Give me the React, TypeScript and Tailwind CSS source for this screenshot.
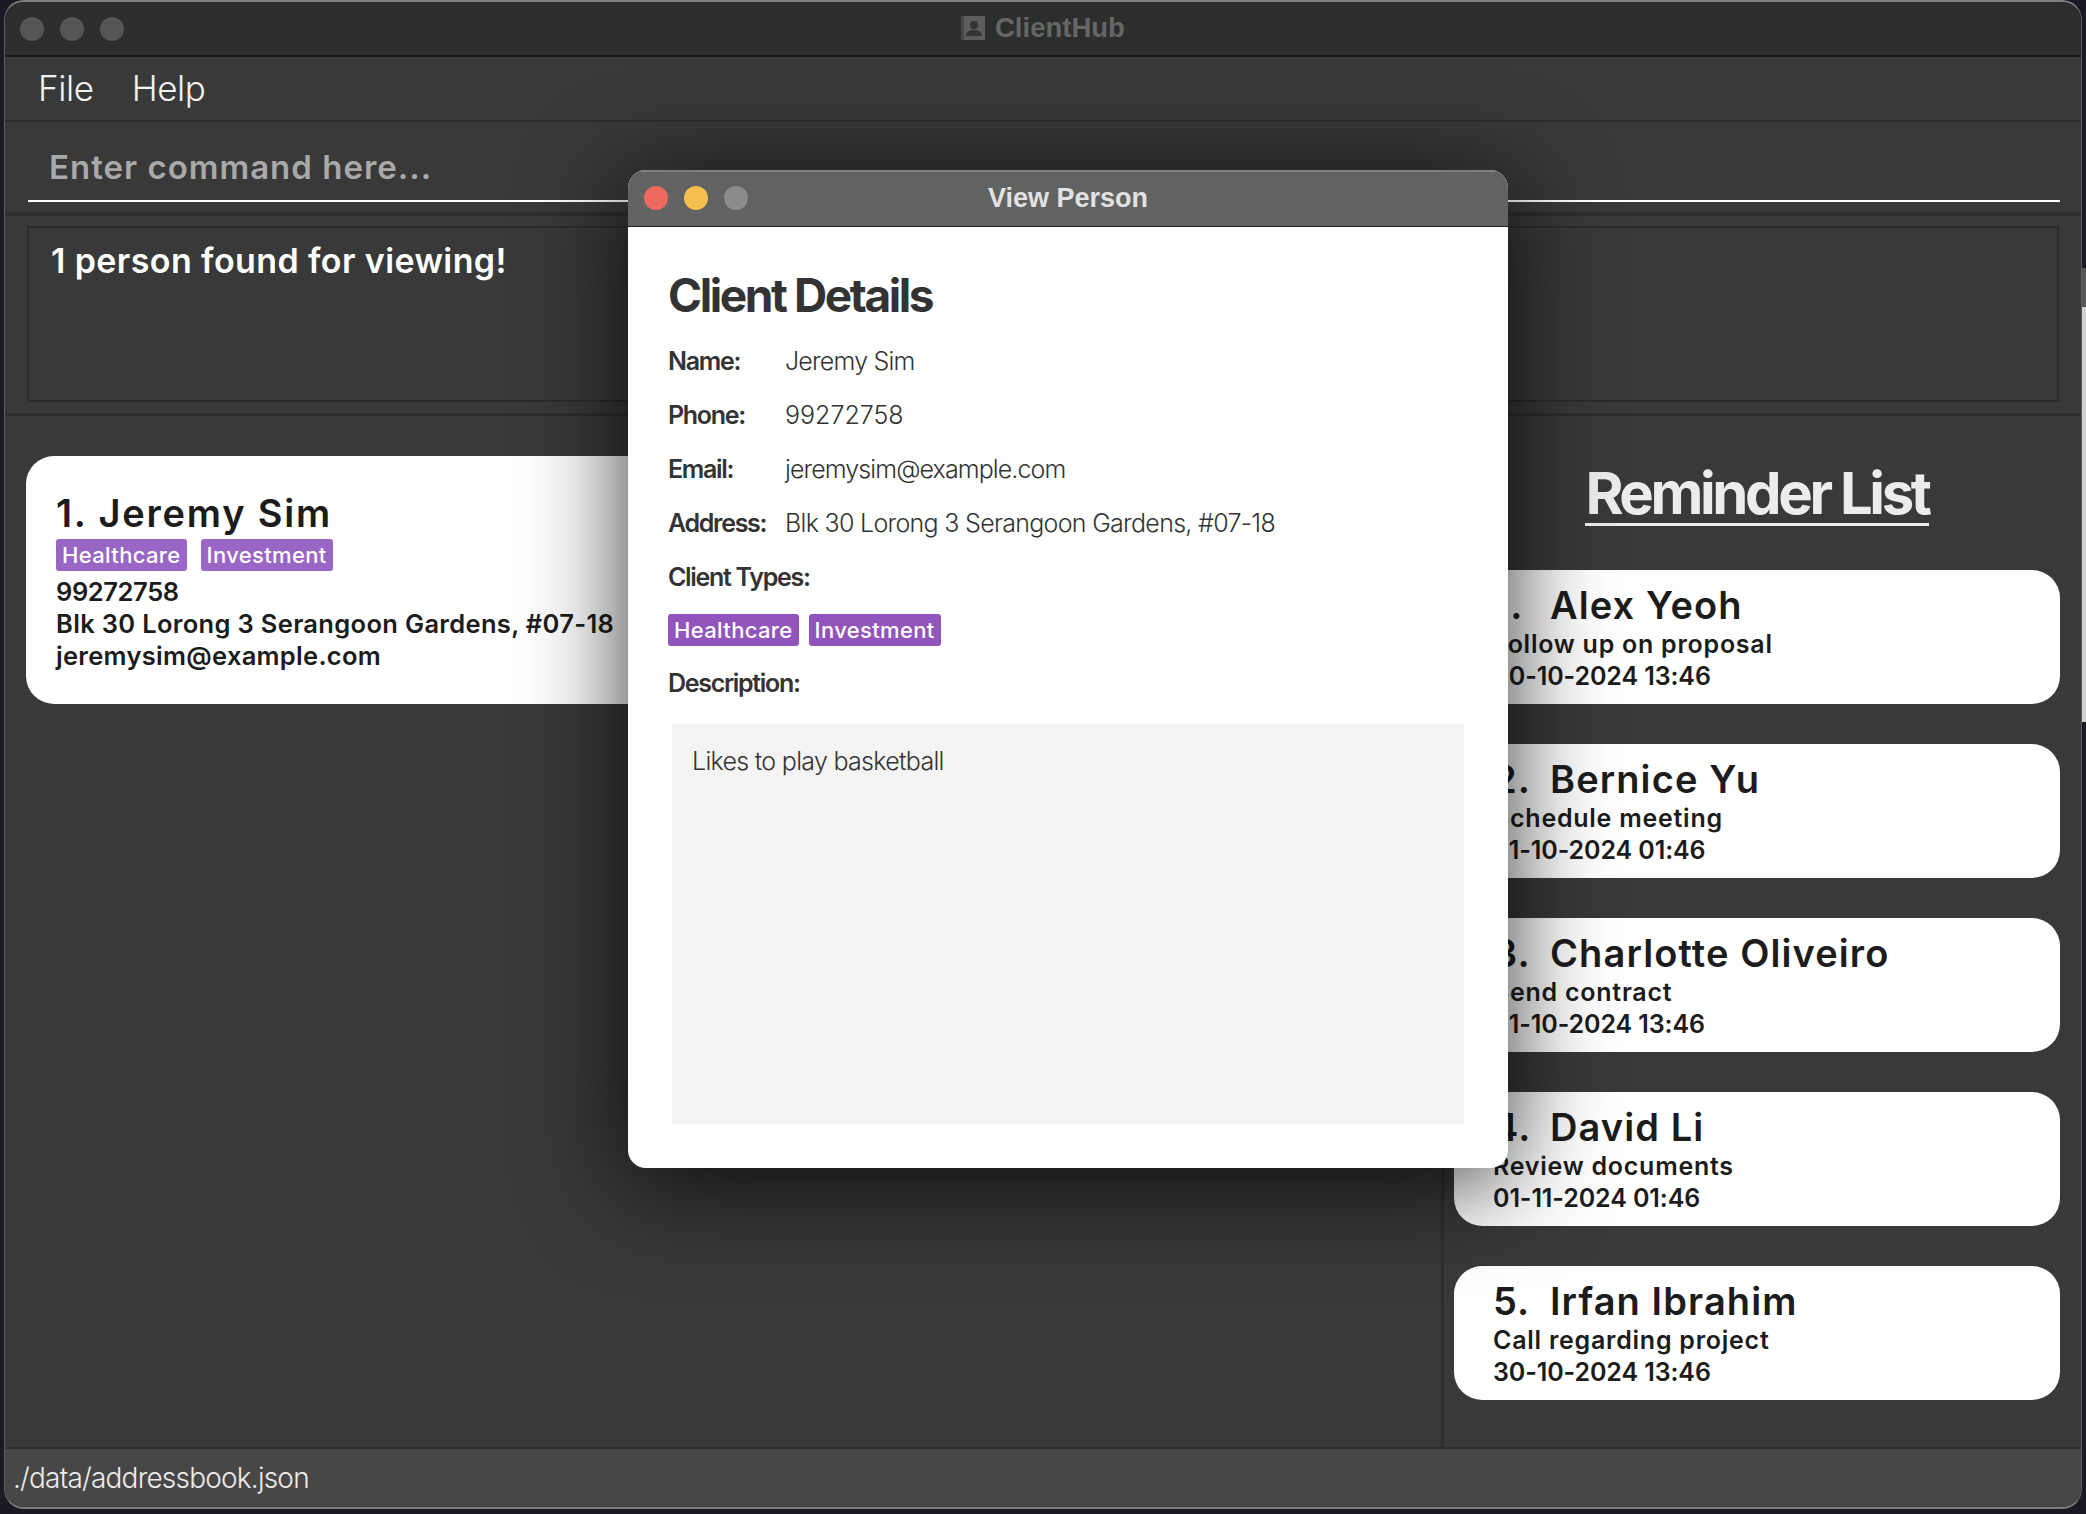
const sans = "font-['Liberation_Sans',Arial,sans-serif]";
const inter = "font-['Inter',sans-serif]";

const reminders = [
  { id: 1, name: 'Alex Yeoh', note: 'Follow up on proposal', date: '30-10-2024 13:46' },
  { id: 2, name: 'Bernice Yu', note: 'Schedule meeting', date: '31-10-2024 01:46' },
  { id: 3, name: 'Charlotte Oliveiro', note: 'Send contract', date: '31-10-2024 13:46' },
  { id: 4, name: 'David Li', note: 'Review documents', date: '01-11-2024 01:46' },
  { id: 5, name: 'Irfan Ibrahim', note: 'Call regarding project', date: '30-10-2024 13:46' },
];

const details = [
  { label: 'Name:', value: 'Jeremy Sim', tracking: 'tracking-[-0.8px]' },
  { label: 'Phone:', value: '99272758', tracking: 'tracking-[0px]' },
  { label: 'Email:', value: 'jeremysim@example.com', tracking: 'tracking-[-0.9px]' },
  { label: 'Address:', value: 'Blk 30 Lorong 3 Serangoon Gardens, #07-18', tracking: 'tracking-[-0.7px]' },
];

const AppIcon = () => (
  <svg width="26" height="26" viewBox="0 0 26 26" className="shrink-0">
    <rect x="1" y="1" width="24" height="24" fill="#5c5c5c" />
    <rect x="1" y="1" width="3" height="24" fill="#484848" />
    <circle cx="14" cy="10" r="4" fill="#333" />
    <path d="M6 21c0-4 4-6 8-6s8 2 8 6z" fill="#333" />
  </svg>
);

const Tag = ({ label, color }: { label: string; color: string }) => (
  <span className={`flex h-8 items-center rounded-[3px] px-[6px] text-[22px] font-medium tracking-[0.35px] text-white ${inter} ${color}`}>
    {label}
  </span>
);

const ReminderCard = ({ id, name, note, date }: { id: number; name: string; note: string; date: string }) => (
  <div className={`h-[134px] rounded-[28px] bg-white pl-[39px] pt-[12px] font-semibold text-[#1c1c1c] ${inter}`}>
    <div className="flex h-[46px] items-center text-[38px] leading-[46px] tracking-[1.1px]">
      <span className="w-[57px]">{id}.</span>
      <span>{name}</span>
    </div>
    <div className="text-[25px] leading-[32px] tracking-[0.75px]">{note}</div>
    <div className="text-[25px] leading-[32px] tracking-[-0.1px]">{date}</div>
  </div>
);

const ViewPersonDialog = () => (
  <div className="absolute left-[628px] top-[170px] flex h-[998px] w-[880px] flex-col overflow-hidden rounded-[18px] bg-white shadow-[0_14px_100px_rgba(0,0,0,0.8)]">
    <div className="flex h-[57px] shrink-0 items-center border-b border-[#1f1f1f] border-t-2 border-t-[#7d7f7e] bg-[#616362] px-4 pb-[2px]">
      <div className="flex w-[120px] gap-4">
        <span className="h-6 w-6 rounded-full bg-[#ee6a5f]" />
        <span className="h-6 w-6 rounded-full bg-[#f4bf4f]" />
        <span className="h-6 w-6 rounded-full bg-[#8a8c8b]" />
      </div>
      <span className={`flex-1 pr-[120px] text-center text-[27px] font-bold text-[#e2e2e2] ${sans}`}>View Person</span>
    </div>
    <div className={`flex flex-1 flex-col pl-[40px] pr-[44px] text-[#333] ${inter}`}>
      <h2 className="mt-[40px] text-[46px] font-bold leading-[56px] tracking-[-2.4px]">Client Details</h2>
      <div className="mt-[12px] flex flex-col">
        {details.map(row => (
          <div key={row.label} className="flex h-[54px] items-center text-[25px]">
            <span className="w-[117px] font-semibold tracking-[-1.3px]">{row.label}</span>
            <span className={`font-light ${row.tracking}`}>{row.value}</span>
          </div>
        ))}
        <div className="flex h-[54px] items-center text-[25px] font-semibold tracking-[-1.3px]">Client Types:</div>
      </div>
      <div className="mt-[9px] flex gap-[10px]">
        <Tag label="Healthcare" color="bg-[#9155bb]" />
        <Tag label="Investment" color="bg-[#9155bb]" />
      </div>
      <div className="mt-[11px] flex h-[54px] items-center text-[25px] font-semibold tracking-[-1.3px]">Description:</div>
      <div className="ml-[4px] mt-[13px] h-[400px] bg-[#f4f4f4] px-[20px] pt-[20px] text-[25px] font-light leading-[34px] tracking-[-0.7px]">
        Likes to play basketball
      </div>
    </div>
  </div>
);

export default function App() {
  return (
    <div className="relative flex h-[1514px] w-[2086px] overflow-hidden bg-[#191a24]">
      <div className="ml-[4px] flex h-[1509px] w-[2078px] flex-col overflow-hidden rounded-[20px] border-x border-b-2 border-t-2 border-x-[#5d5d5d] border-b-[#7a7a7a] border-t-[#7f7f7f] bg-[#393939]">
        <div className="flex h-[55px] shrink-0 items-center border-b-2 border-[#181a1a] bg-[#2c2e2d] pl-[15px]">
          <div className="flex w-[120px] gap-4">
            <span className="h-6 w-6 rounded-full bg-[#545655]" />
            <span className="h-6 w-6 rounded-full bg-[#545655]" />
            <span className="h-6 w-6 rounded-full bg-[#545655]" />
          </div>
          <div className={`ml-[820px] flex items-center gap-[9px] pb-[2px] text-[27.5px] font-bold text-[#666] ${sans}`}>
            <AppIcon />
            ClientHub
          </div>
        </div>

        <div className={`flex h-[65px] shrink-0 items-center gap-[38px] border-b-2 border-[#2e2e2e] pl-[33px] text-[35px] font-light tracking-[-0.4px] text-[#f2f2f2] ${inter}`}>
          <span>File</span>
          <span>Help</span>
        </div>

        <div className="h-[94px] shrink-0 border-b-4 border-[#2e2e2e] pl-[23px] pr-[21px] pt-[12px]">
          <div className={`h-[68px] border-b-2 border-white pl-[21px] text-[33px] font-semibold leading-[66px] tracking-[1px] text-[#a9a9a9] ${inter}`}>
            Enter command here...
          </div>
        </div>

        <div className="h-[200px] shrink-0 border-b-[3px] border-[#2e2e2e] px-[22px] pt-[10px]">
          <div className={`h-[176px] border-2 border-[#2c2c2c] pl-[22px] pt-[11px] text-[34px] font-semibold leading-[44px] tracking-[0.4px] text-white ${inter}`}>
            1 person found for viewing!
          </div>
        </div>

        <div className="flex min-h-0 flex-1">
          <div className="w-[1439px] shrink-0 border-r-[3px] border-[#2e2e2e] pl-[21px] pr-[10px] pt-[40px]">
            <div className={`h-[248px] rounded-[28px] bg-white pl-[30px] pt-[34px] font-semibold text-[#1c1c1c] ${inter}`}>
              <div className="text-[38px] leading-[46px] tracking-[1.8px]">1. Jeremy Sim</div>
              <div className="mt-[3px] flex gap-[14px]">
                <Tag label="Healthcare" color="bg-[#9a66c6]" />
                <Tag label="Investment" color="bg-[#9a66c6]" />
              </div>
              <div className="mt-[5px] text-[25.5px] leading-[32px] tracking-[-0.4px]">99272758</div>
              <div className="text-[25.5px] leading-[32px] tracking-[0.33px]">Blk 30 Lorong 3 Serangoon Gardens, #07-18</div>
              <div className="text-[25.5px] leading-[32px] tracking-[0.3px]">jeremysim@example.com</div>
            </div>
          </div>

          <div className="flex flex-1 flex-col pl-[10px] pr-[21px]">
            <div className="flex h-[154px] justify-center pt-[44px]">
              <h2 className={`h-[66px] border-b-[3px] border-[#ececec] text-[58px] font-bold leading-[66px] tracking-[-3.4px] text-[#ececec] ${inter}`}>
                Reminder List
              </h2>
            </div>
            <div className="flex flex-col gap-[40px]">
              {reminders.map(r => (
                <ReminderCard key={r.id} {...r} />
              ))}
            </div>
          </div>
        </div>

        <div className={`flex h-[60px] shrink-0 items-center border-t-2 border-[#2e2e2e] bg-[#474747] pl-[8px] text-[28px] font-light tracking-[-0.8px] text-[#ececec] ${inter}`}>
          ./data/addressbook.json
        </div>
      </div>

      <div className="mt-[268px] w-1 shrink-0">
        <div className="h-[39px] bg-[#555]" />
        <div className="h-[415px] bg-[#d0d0d0]" />
      </div>

      <ViewPersonDialog />
    </div>
  );
}
